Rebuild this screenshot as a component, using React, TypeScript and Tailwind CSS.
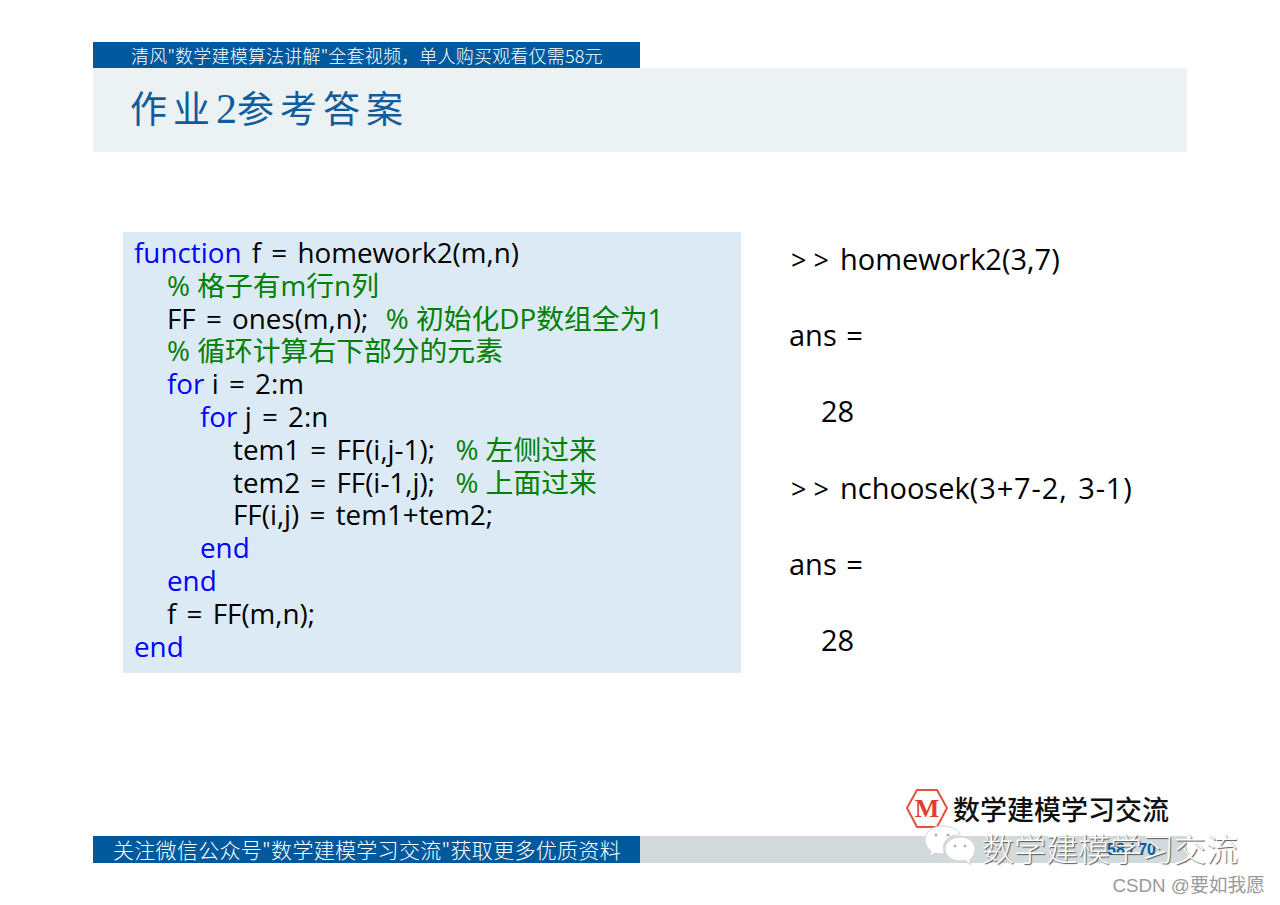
function K({ children }: { children: React.ReactNode }) {
  return <span className="text-[#0000ff] [word-spacing:0px]">{children}</span>;
}
function C({ children }: { children: React.ReactNode }) {
  return <span className="text-[#008000] [word-spacing:0px]">{children}</span>;
}

function Row({ pad, children }: { pad: string; children: React.ReactNode }) {
  return <div className={`h-[32.8px] leading-[32.8px] whitespace-pre ${pad}`}>{children}</div>;
}

function Code() {
  return (
    <div className="w-[618px] h-[441px] bg-[#dceaf5] pl-[11px] pt-[4px] text-[27.8px] [word-spacing:3px] text-black font-['Open_Sans','Noto_Sans_CJK_SC',sans-serif]">
      <Row pad="pl-0"><K>function</K> f = homework2(m,n)</Row>
      <Row pad="pl-[33px]"><C>% 格子有m行n列</C></Row>
      <Row pad="pl-[33px]">FF = ones(m,n); <C> % 初始化DP数组全为1</C></Row>
      <Row pad="pl-[33px]"><C>% 循环计算右下部分的元素</C></Row>
      <Row pad="pl-[33px]"><K>for </K>i = 2:m</Row>
      <Row pad="pl-[66px]"><K>for </K>j = 2:n</Row>
      <Row pad="pl-[99px]">tem1 = FF(i,j-1);  <C>% 左侧过来</C></Row>
      <Row pad="pl-[99px]">tem2 = FF(i-1,j);  <C>% 上面过来</C></Row>
      <Row pad="pl-[99px]">FF(i,j) = tem1+tem2;</Row>
      <Row pad="pl-[66px]"><K>end</K></Row>
      <Row pad="pl-[33px]"><K>end</K></Row>
      <Row pad="pl-[33px]">f = FF(m,n);</Row>
      <Row pad="pl-0"><K>end</K></Row>
    </div>
  );
}

function Line({ pad, children }: { pad: string; children: React.ReactNode }) {
  return <div className={`h-[76.4px] leading-[38px] whitespace-pre ${pad}`}>{children}</div>;
}

function Prompt() {
  return <span className="inline-block w-[51px] pl-[2px] text-[27px] [word-spacing:0px]">&gt; &gt;</span>;
}

function Output() {
  return (
    <div className="pl-[48px] pt-[7.500px] text-[29px] [word-spacing:2px] text-black font-['Open_Sans',sans-serif]">
      <Line pad="pl-0"><Prompt />homework2(3,7)</Line>
      <Line pad="pl-0">ans =</Line>
      <Line pad="pl-[32px]">28</Line>
      <Line pad="pl-0"><Prompt />nchoosek<span className="tracking-[0.900px]">(3+7-2, 3-1)</span></Line>
      <Line pad="pl-0">ans =</Line>
      <Line pad="pl-[32px]">28</Line>
    </div>
  );
}

export default function App() {
  return (
    <div className="relative w-[1280px] h-[905px] bg-white overflow-hidden pt-[42px] pl-[93px] font-['Noto_Sans_CJK_SC',sans-serif]">
      <div className="w-[547px] h-[26px] bg-[#00599c] text-white text-[18px] font-light leading-[27px] pl-[38px] tracking-[0.200px] whitespace-pre">
        清风"数学建模算法讲解"全套视频，单人购买观看仅需58元
      </div>
      <div className="w-[1094px] h-[84px] bg-[#ecf2f3] pl-[37px] pt-[12px] text-[#0f5c9c] text-[37px] leading-[54px] tracking-[6px]">
        作业<span className="font-['Liberation_Serif',serif] text-[42px] tracking-[0px]">2</span>参考答案
      </div>
      <div className="flex h-[441px] mt-[80px] pl-[30px]">
        <Code />
        <Output />
      </div>
      <div className="flex mt-[163px] w-[1094px] h-[27px]">
        <div className="w-[547px] bg-[#00599c] text-white text-[21px] font-light leading-[27px] pl-[20px] tracking-[0.300px] whitespace-pre">
          关注微信公众号"数学建模学习交流"获取更多优质资料
        </div>
        <div className="flex-1 bg-[#d3dadc] text-right pr-[31px] text-[16px] leading-[27px] font-bold text-[#005a9e] font-['Liberation_Sans',sans-serif]">
          58 / 70
        </div>
      </div>

      <div className="absolute left-[906px] top-[788px] flex items-center gap-[5px]">
        <svg width="42" height="42" viewBox="0 0 42 42">
          <polygon points="11,2 31,2 41,20 31,39 11,39 1,20" fill="#fff" stroke="#e8503a" strokeWidth="2" />
          <text x="21" y="29" textAnchor="middle" fontSize="26" fontWeight="700" fontFamily="Liberation Serif" fill="#e0402a">M</text>
        </svg>
        <span className="text-[27px] leading-[32px] font-medium text-[#111] whitespace-pre">数学建模学习交流</span>
      </div>

      <div className="absolute left-[924px] top-[824px] flex items-center gap-[6px]">
        <svg width="52" height="46" viewBox="0 0 52 46">
          <path d="M18 2C8 2 1 8.500 1 16c0 4.500 2.500 8 6 11l-1.500 5 6-3c2 .5 4 1 6.500 1 .8 0 1.500 0 2.300-.1C20 27 19.500 25 19.500 23.500c0-7 6.500-12.700 15-12.700.7 0 1.300 0 2 .1C34.500 5.800 27 2 18 2Z" fill="#fff" stroke="#d4d4d4" />
          <path d="M51 25c0-6.500-6.500-12-15-12s-15 5.500-15 12 6.500 12 15 12c2 0 3.700-.3 5.300-.8L47 41l-1.300-5C49 33.500 51 29.500 51 25Z" fill="#fff" stroke="#d4d4d4" />
          <circle cx="12" cy="11" r="1.600" fill="#b5b5b5" />
          <circle cx="24" cy="11" r="1.600" fill="#b5b5b5" />
          <circle cx="31" cy="22" r="1.500" fill="#b5b5b5" />
          <circle cx="41" cy="22" r="1.500" fill="#b5b5b5" />
        </svg>
        <span className="text-[32px] leading-[40px] font-light text-white whitespace-pre [text-shadow:1px_1px_1px_#555]">数学建模学习交流</span>
      </div>

      <div className="absolute right-[15px] top-[875px] text-[18.800px] leading-[22px] text-[#9a9a9a] font-['Liberation_Sans','Noto_Sans_CJK_SC',sans-serif] whitespace-pre">
        CSDN @要如我愿
      </div>
    </div>
  );
}
